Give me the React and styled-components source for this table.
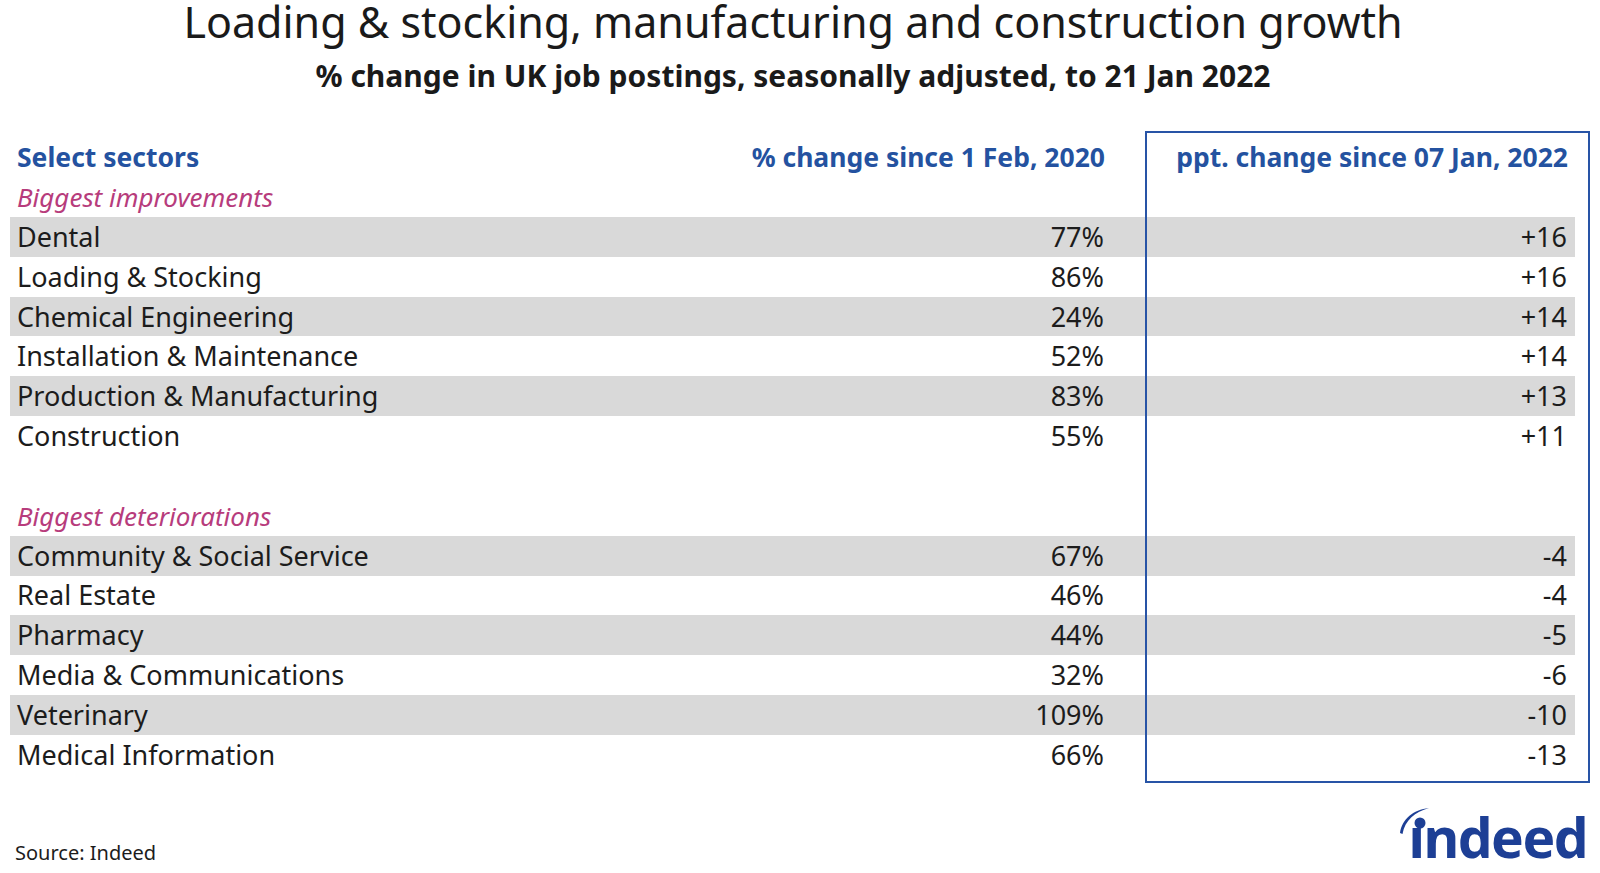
import styled, { createGlobalStyle } from "styled-components";

const GlobalStyle = createGlobalStyle`
  *, *::before, *::after {
    box-sizing: border-box;
  }
  html, body {
    margin: 0;
    padding: 0;
    background: #ffffff;
  }
  body {
    font-family: "Noto Sans", "Open Sans", sans-serif;
    color: #1c1c1c;
  }
`;

const Page = styled.div`
  width: 1600px;
  height: 873px;
  position: relative;
  overflow: hidden;
  display: flex;
  flex-direction: column;
`;

const Title = styled.h1`
  margin: 0;
  padding-right: 14px;
  font-size: 43px;
  line-height: 43px;
  height: 43px;
  font-weight: 400;
  text-align: center;
  color: #1a1a1a;
`;

const Subtitle = styled.h2`
  margin: 18px 0 0;
  padding-right: 14px;
  font-size: 30px;
  line-height: 30px;
  font-weight: 700;
  text-align: center;
  color: #1a1a1a;
`;

const TableWrap = styled.div`
  position: relative;
  margin: 40px 0 0 10px;
  width: 1565px;
`;

const Grid = styled.div`
  display: grid;
  grid-template-columns: 690px 412px 463px;
`;

const Row = styled.div`
  display: contents;

  & > div {
    height: ${(p) => p.h || 39.8}px;
    background: ${(p) => (p.shaded ? "#d9d9d9" : "transparent")};
  }
`;

const Cell = styled.div`
  display: flex;
  align-items: center;
  justify-content: ${(p) => (p.right ? "flex-end" : "flex-start")};
  padding: ${(p) => (p.right ? "0 8px 0 0" : "0 0 0 7px")};
  font-size: 27px;
  line-height: 40px;
  white-space: nowrap;
`;

const HeadCell = styled.div`
  display: flex;
  align-items: flex-start;
  justify-content: ${(p) => (p.right ? "flex-end" : "flex-start")};
  padding: ${(p) => (p.right ? "13px 7px 0 0" : "13px 0 0 7px")};
  font-size: 26.5px;
  line-height: 26px;
  font-weight: 700;
  color: #2452a0;
  white-space: nowrap;
`;

const GroupLabel = styled.div`
  grid-column: 1 / -1;
  height: 40px;
  display: flex;
  align-items: center;
  padding-left: 7px;
  font-size: 26px;
  line-height: 40px;
  font-style: italic;
  color: #b73c7c;
`;

const Frame = styled.div`
  position: absolute;
  left: 1135px;
  top: 0;
  width: 445px;
  height: 652px;
  border: 2px solid #2854a6;
  pointer-events: none;
`;

const Footer = styled.div`
  display: flex;
  align-items: flex-end;
  justify-content: space-between;
  padding: 0 13px 0 15px;
  margin-top: auto;
`;

const Source = styled.span`
  font-size: 20px;
  line-height: 26px;
  color: #1c1c1c;
  margin-bottom: 7px;
`;

const Logo = styled.div`
  position: relative;
  font-family: "Noto Sans", "Open Sans", sans-serif;
  font-weight: 700;
  font-size: 55px;
  line-height: 64px;
  letter-spacing: -1.5px;
  color: #1d3f95;
  margin-bottom: 4px;
`;

const LogoMark = styled.svg`
  position: absolute;
  left: -10px;
  top: 0;
  overflow: visible;
`;

const improvements = [
  ["Dental", "77%", "+16"],
  ["Loading & Stocking", "86%", "+16"],
  ["Chemical Engineering", "24%", "+14"],
  ["Installation & Maintenance", "52%", "+14"],
  ["Production & Manufacturing", "83%", "+13"],
  ["Construction", "55%", "+11"],
];

const deteriorations = [
  ["Community & Social Service", "67%", "-4"],
  ["Real Estate", "46%", "-4"],
  ["Pharmacy", "44%", "-5"],
  ["Media & Communications", "32%", "-6"],
  ["Veterinary", "109%", "-10"],
  ["Medical Information", "66%", "-13"],
];

const DataRows = ({ rows }) =>
  rows.map(([name, pct, ppt], i) => (
    <Row key={name} shaded={i % 2 === 0}>
      <Cell>{name}</Cell>
      <Cell right>{pct}</Cell>
      <Cell right>{ppt}</Cell>
    </Row>
  ));

const App = () => {
  return (
    <Page>
      <GlobalStyle />
      <Title>Loading &amp; stocking, manufacturing and construction growth</Title>
      <Subtitle>% change in UK job postings, seasonally adjusted, to 21 Jan 2022</Subtitle>
      <TableWrap>
        <Grid>
          <Row h={46}>
            <HeadCell>Select sectors</HeadCell>
            <HeadCell right>% change since 1 Feb, 2020</HeadCell>
            <HeadCell right>ppt. change since 07 Jan, 2022</HeadCell>
          </Row>
          <GroupLabel>Biggest improvements</GroupLabel>
          <DataRows rows={improvements} />
          <Row h={40}>
            <Cell />
            <Cell />
            <Cell />
          </Row>
          <GroupLabel>Biggest deteriorations</GroupLabel>
          <DataRows rows={deteriorations} />
        </Grid>
        <Frame />
      </TableWrap>
      <Footer>
        <Source>Source: Indeed</Source>
        <Logo>
          ındeed
          <LogoMark width="40" height="40" viewBox="0 0 40 40">
            <path
              d="M1 28 C3 14 14 5 30 3 C16 7 6 15 3.5 29 Z"
              fill="#1d3f95"
            />
            <circle cx="21" cy="18" r="5.5" fill="#1d3f95" />
          </LogoMark>
        </Logo>
      </Footer>
    </Page>
  );
};

export default App;
